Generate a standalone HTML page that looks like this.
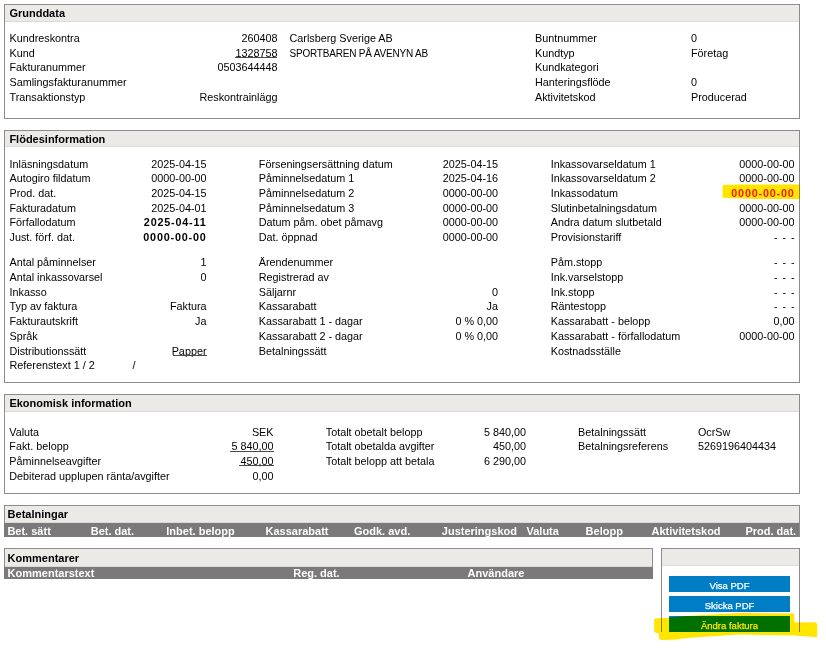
<!DOCTYPE html>
<html><head><meta charset="utf-8"><style>
html,body{margin:0;padding:0;background:#fff;width:826px;height:650px;overflow:hidden;position:relative}
body{font-family:"Liberation Sans",sans-serif;color:#000}
.t{position:absolute;white-space:nowrap;font-size:10.8px;line-height:14px}
.b{font-weight:bold;letter-spacing:0.8px}
.red{font-weight:bold;color:#f21c00;letter-spacing:0.8px}
.u{}
.ul{position:absolute;height:1px;background:#4a4a4a}
.dash{word-spacing:1.8px}
.caps{font-size:10px;letter-spacing:-0.2px}
.h{position:absolute;white-space:nowrap;font-size:11px;line-height:14px;font-weight:bold;color:#000;left:9.4px}
.bt{position:absolute;white-space:nowrap;font-size:11px;line-height:14px;font-weight:bold;color:#fff}
.box{position:absolute;border:1px solid #8c8c8c;box-sizing:border-box;background:#fff}
.hb{position:absolute;left:0;right:0;top:0;height:16px;background:#ebeae7;border-bottom:1px solid #dcdad7}
.bar{position:absolute;background:#7b7979}
.btn{position:absolute;left:669px;width:121px;height:16px;color:#fff;font-size:9.5px;-webkit-text-stroke:0.25px #fff;line-height:19px;text-align:center}
.hl{position:absolute;mix-blend-mode:multiply}
</style></head><body>

<div class="box" style="left:4px;top:4px;width:796px;height:115px"><div class="hb"></div></div>
<div class="box" style="left:4px;top:130px;width:796px;height:253px"><div class="hb" style="height:15px"></div></div>
<div class="box" style="left:4px;top:394px;width:796px;height:100px"><div class="hb"></div></div>
<div class="box" style="left:4px;top:505px;width:796px;height:32px;border-bottom:0"><div class="hb"></div></div>
<div class="bar" style="left:4px;top:523px;width:795px;height:14px"></div>
<div class="box" style="left:4px;top:548px;width:649px;height:31px;border-bottom:0"><div class="hb" style="height:17px"></div></div>
<div class="bar" style="left:4px;top:567px;width:649px;height:12px"></div>
<div class="box" style="left:661px;top:548px;width:139px;height:84px;border-bottom:0"><div class="hb"></div></div>
<div class="btn" style="top:576px;background:#007dc5">Visa PDF</div>
<div class="btn" style="top:596px;background:#007dc5">Skicka PDF</div>
<div class="btn" style="top:616px;background:#007dc5">Ändra faktura</div>
<div class="h" style="top:6.00px;left:9.40px">Grunddata</div>
<div class="h" style="top:132.10px;left:9.40px">Flödesinformation</div>
<div class="h" style="top:396.40px;left:9.40px">Ekonomisk information</div>
<div class="h" style="top:506.80px;left:7.60px">Betalningar</div>
<div class="h" style="top:550.50px;left:7.60px">Kommentarer</div>
<div class="bt" style="left:7.40px;top:523.6px">Bet. sätt</div>
<div class="bt" style="left:90.70px;top:523.6px">Bet. dat.</div>
<div class="bt" style="left:166.30px;top:523.6px">Inbet. belopp</div>
<div class="bt" style="left:265.50px;top:523.6px">Kassarabatt</div>
<div class="bt" style="left:354.00px;top:523.6px">Godk. avd.</div>
<div class="bt" style="left:441.80px;top:523.6px">Justeringskod</div>
<div class="bt" style="left:526.50px;top:523.6px">Valuta</div>
<div class="bt" style="left:585.60px;top:523.6px">Belopp</div>
<div class="bt" style="left:651.50px;top:523.6px">Aktivitetskod</div>
<div class="bt" style="left:745.40px;top:523.6px">Prod. dat.</div>
<div class="bt" style="left:7.60px;top:565.6px">Kommentarstext</div>
<div class="bt" style="left:293.20px;top:565.6px">Reg. dat.</div>
<div class="bt" style="left:467.60px;top:565.6px">Användare</div>
<div class="t" style="left:9.50px;top:31.00px">Kundreskontra</div>
<div class="t" style="left:9.50px;top:45.63px">Kund</div>
<div class="t" style="left:9.50px;top:60.26px">Fakturanummer</div>
<div class="t" style="left:9.50px;top:74.89px">Samlingsfakturanummer</div>
<div class="t" style="left:9.50px;top:89.52px">Transaktionstyp</div>
<div class="t" style="right:548.50px;top:31.00px">260408</div>
<div class="t u" style="right:548.50px;top:45.63px">1328758</div>
<div class="t" style="right:548.50px;top:60.26px">0503644448</div>
<div class="t" style="right:548.50px;top:89.52px">Reskontrainlägg</div>
<div class="t" style="left:289.50px;top:31.00px">Carlsberg Sverige AB</div>
<div class="t caps" style="left:289.50px;top:46.93px">SPORTBAREN PÅ AVENYN AB</div>
<div class="t" style="left:535.00px;top:31.00px">Buntnummer</div>
<div class="t" style="left:535.00px;top:45.63px">Kundtyp</div>
<div class="t" style="left:535.00px;top:60.26px">Kundkategori</div>
<div class="t" style="left:535.00px;top:74.89px">Hanteringsflöde</div>
<div class="t" style="left:535.00px;top:89.52px">Aktivitetskod</div>
<div class="t" style="left:691.00px;top:31.00px">0</div>
<div class="t" style="left:691.00px;top:45.63px">Företag</div>
<div class="t" style="left:691.00px;top:74.89px">0</div>
<div class="t" style="left:691.00px;top:89.52px">Producerad</div>
<div class="t" style="left:9.50px;top:156.60px">Inläsningsdatum</div>
<div class="t" style="left:9.50px;top:171.27px">Autogiro fildatum</div>
<div class="t" style="left:9.50px;top:185.94px">Prod. dat.</div>
<div class="t" style="left:9.50px;top:200.61px">Fakturadatum</div>
<div class="t" style="left:9.50px;top:215.28px">Förfallodatum</div>
<div class="t" style="left:9.50px;top:229.95px">Just. förf. dat.</div>
<div class="t" style="right:619.50px;top:156.60px">2025-04-15</div>
<div class="t" style="right:619.50px;top:171.27px">0000-00-00</div>
<div class="t" style="right:619.50px;top:185.94px">2025-04-15</div>
<div class="t" style="right:619.50px;top:200.61px">2025-04-01</div>
<div class="t b" style="right:619.50px;top:215.28px">2025-04-11</div>
<div class="t b" style="right:619.50px;top:229.95px">0000-00-00</div>
<div class="t" style="left:258.80px;top:156.60px">Förseningsersättning datum</div>
<div class="t" style="left:258.80px;top:171.27px">Påminnelsedatum 1</div>
<div class="t" style="left:258.80px;top:185.94px">Påminnelsedatum 2</div>
<div class="t" style="left:258.80px;top:200.61px">Påminnelsedatum 3</div>
<div class="t" style="left:258.80px;top:215.28px">Datum påm. obet påmavg</div>
<div class="t" style="left:258.80px;top:229.95px">Dat. öppnad</div>
<div class="t" style="right:328.00px;top:156.60px">2025-04-15</div>
<div class="t" style="right:328.00px;top:171.27px">2025-04-16</div>
<div class="t" style="right:328.00px;top:185.94px">0000-00-00</div>
<div class="t" style="right:328.00px;top:200.61px">0000-00-00</div>
<div class="t" style="right:328.00px;top:215.28px">0000-00-00</div>
<div class="t" style="right:328.00px;top:229.95px">0000-00-00</div>
<div class="t" style="left:550.70px;top:156.60px">Inkassovarseldatum 1</div>
<div class="t" style="left:550.70px;top:171.27px">Inkassovarseldatum 2</div>
<div class="t" style="left:550.70px;top:185.94px">Inkassodatum</div>
<div class="t" style="left:550.70px;top:200.61px">Slutinbetalningsdatum</div>
<div class="t" style="left:550.70px;top:215.28px">Andra datum slutbetald</div>
<div class="t" style="left:550.70px;top:229.95px">Provisionstariff</div>
<div class="t" style="right:31.50px;top:156.60px">0000-00-00</div>
<div class="t" style="right:31.50px;top:171.27px">0000-00-00</div>
<div class="t red" style="right:31.50px;top:185.94px">0000-00-00</div>
<div class="t" style="right:31.50px;top:200.61px">0000-00-00</div>
<div class="t" style="right:31.50px;top:215.28px">0000-00-00</div>
<div class="t dash" style="right:31.50px;top:229.95px">- - -</div>
<div class="t" style="left:9.50px;top:255.20px">Antal påminnelser</div>
<div class="t" style="left:9.50px;top:269.92px">Antal inkassovarsel</div>
<div class="t" style="left:9.50px;top:284.64px">Inkasso</div>
<div class="t" style="left:9.50px;top:299.36px">Typ av faktura</div>
<div class="t" style="left:9.50px;top:314.08px">Fakturautskrift</div>
<div class="t" style="left:9.50px;top:328.80px">Språk</div>
<div class="t" style="left:9.50px;top:343.52px">Distributionssätt</div>
<div class="t" style="left:9.50px;top:358.24px">Referenstext 1 / 2</div>
<div class="t" style="right:619.50px;top:255.20px">1</div>
<div class="t" style="right:619.50px;top:269.92px">0</div>
<div class="t" style="right:619.50px;top:299.36px">Faktura</div>
<div class="t" style="right:619.50px;top:314.08px">Ja</div>
<div class="t u" style="right:619.50px;top:343.52px">Papper</div>
<div class="t" style="left:132.50px;top:358.24px">/</div>
<div class="t" style="left:258.80px;top:255.20px">Ärendenummer</div>
<div class="t" style="left:258.80px;top:269.92px">Registrerad av</div>
<div class="t" style="left:258.80px;top:284.64px">Säljarnr</div>
<div class="t" style="left:258.80px;top:299.36px">Kassarabatt</div>
<div class="t" style="left:258.80px;top:314.08px">Kassarabatt 1 - dagar</div>
<div class="t" style="left:258.80px;top:328.80px">Kassarabatt 2 - dagar</div>
<div class="t" style="left:258.80px;top:343.52px">Betalningssätt</div>
<div class="t" style="right:328.00px;top:284.64px">0</div>
<div class="t" style="right:328.00px;top:299.36px">Ja</div>
<div class="t" style="right:328.00px;top:314.08px">0 % 0,00</div>
<div class="t" style="right:328.00px;top:328.80px">0 % 0,00</div>
<div class="t" style="left:550.70px;top:255.20px">Påm.stopp</div>
<div class="t" style="left:550.70px;top:269.92px">Ink.varselstopp</div>
<div class="t" style="left:550.70px;top:284.64px">Ink.stopp</div>
<div class="t" style="left:550.70px;top:299.36px">Räntestopp</div>
<div class="t" style="left:550.70px;top:314.08px">Kassarabatt - belopp</div>
<div class="t" style="left:550.70px;top:328.80px">Kassarabatt - förfallodatum</div>
<div class="t" style="left:550.70px;top:343.52px">Kostnadsställe</div>
<div class="t dash" style="right:31.50px;top:255.20px">- - -</div>
<div class="t dash" style="right:31.50px;top:269.92px">- - -</div>
<div class="t dash" style="right:31.50px;top:284.64px">- - -</div>
<div class="t dash" style="right:31.50px;top:299.36px">- - -</div>
<div class="t" style="right:31.50px;top:314.08px">0,00</div>
<div class="t" style="right:31.50px;top:328.80px">0000-00-00</div>
<div class="t" style="left:9.30px;top:424.50px">Valuta</div>
<div class="t" style="left:9.30px;top:439.20px">Fakt. belopp</div>
<div class="t" style="left:9.30px;top:453.90px">Påminnelseavgifter</div>
<div class="t" style="left:9.30px;top:468.60px">Debiterad upplupen ränta/avgifter</div>
<div class="t" style="right:552.50px;top:424.50px">SEK</div>
<div class="t u" style="right:552.50px;top:439.20px">5 840,00</div>
<div class="t u" style="right:552.50px;top:453.90px">450,00</div>
<div class="t" style="right:552.50px;top:468.60px">0,00</div>
<div class="t" style="left:325.80px;top:424.50px">Totalt obetalt belopp</div>
<div class="t" style="left:325.80px;top:439.20px">Totalt obetalda avgifter</div>
<div class="t" style="left:325.80px;top:453.90px">Totalt belopp att betala</div>
<div class="t" style="right:300.00px;top:424.50px">5 840,00</div>
<div class="t" style="right:300.00px;top:439.20px">450,00</div>
<div class="t" style="right:300.00px;top:453.90px">6 290,00</div>
<div class="t" style="left:578.10px;top:424.50px">Betalningssätt</div>
<div class="t" style="left:578.10px;top:439.20px">Betalningsreferens</div>
<div class="t" style="left:697.90px;top:424.50px">OcrSw</div>
<div class="t" style="left:697.90px;top:439.20px">5269196404434</div>
<div class="ul" style="left:235px;top:57px;width:42px"></div>
<div class="ul" style="left:173px;top:355px;width:34px"></div>
<div class="ul" style="left:230px;top:451px;width:44px"></div>
<div class="ul" style="left:239px;top:465px;width:35px"></div>
<svg class="hl" style="left:0;top:0" width="826" height="650" viewBox="0 0 826 650">
<path d="M722.6,185 L740,184.4 L799.5,184.6 L799.5,199 L755,199 L722.6,197.8 Z" fill="#ffe500"/>
<path d="M654.2,618.6 L669,617.8 L680,616.4 L700,615.2 L740,613 L794,613.4 L794.6,622.4 L815,622.3 Q817.2,622.6 817.2,625 L817.2,636.5 Q817,637.2 815,637 L794,635.6 L740,634.6 L700,637 L680,638.7 L678,639.6 L661,639.9 Q659.2,639.8 659,638 L658.8,633 L656,632.9 Q654.2,632.8 654.2,631 Z" fill="#ffe500"/>
</svg>
</body></html>
